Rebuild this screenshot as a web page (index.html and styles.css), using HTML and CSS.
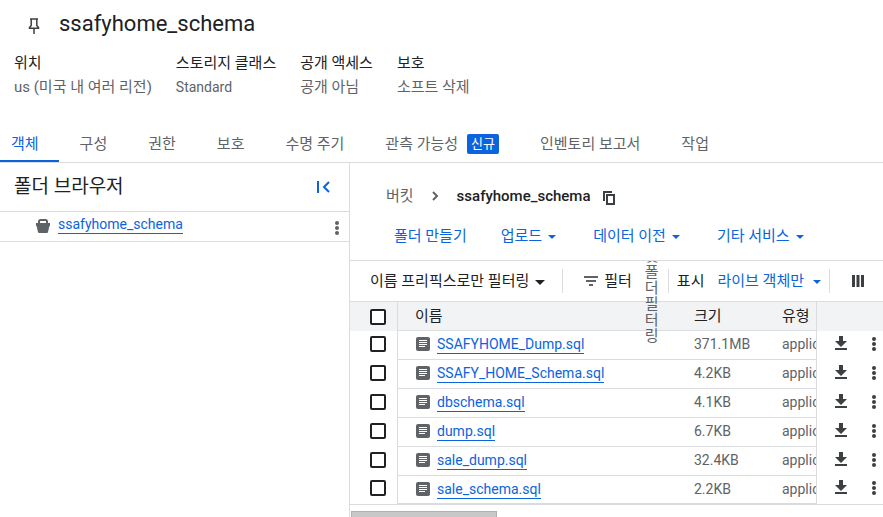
FILE: index.html
```html
<!DOCTYPE html>
<html lang="ko">
<head>
<meta charset="utf-8">
<title>ssafyhome_schema</title>
<link rel="stylesheet" href="styles.css">
</head>
<body>
<svg class="defs" aria-hidden="true">
  <symbol id="doc" viewBox="0 0 14 14"><rect width="14" height="14" rx="2" fill="#5f6368"/><path d="M3 3.5h8M3 5.5h8M3 7.5h8M3 9.5h6" stroke="#fff" stroke-width="1"/></symbol>
  <symbol id="download" viewBox="0 0 14 14"><path d="M5 0h4v5h4L7 11 1 5h4zM1 12h12v2H1z" fill="#3c4043"/></symbol>
  <symbol id="more" viewBox="0 0 4 14"><g fill="currentColor"><circle cx="2" cy="2" r="2"/><circle cx="2" cy="7" r="2"/><circle cx="2" cy="12" r="2"/></g></symbol>
  <symbol id="caret" viewBox="0 0 10 5"><path d="M0 0h10L5 5z" fill="currentColor"/></symbol>
</svg>

<header class="page-head">
  <div class="title-row">
    <svg class="pin" viewBox="0 0 12 16" fill="none" stroke="#3c4043" stroke-width="1.5"><path d="M2 1h8M3.2 1v6.5L1.5 9.5v.8h9v-.8L8.800 7.500V1M6 10v6"/></svg>
    <h1>ssafyhome_schema</h1>
  </div>
  <dl class="facts">
    <div><dt>위치</dt><dd>us (미국 내 여러 리전)</dd></div>
    <div><dt>스토리지 클래스</dt><dd class="latin">Standard</dd></div>
    <div><dt>공개 액세스</dt><dd>공개 아님</dd></div>
    <div><dt>보호</dt><dd>소프트 삭제</dd></div>
  </dl>
</header>

<nav class="tabs">
  <a href="#" class="active" aria-current="page">객체</a>
  <a href="#">구성</a>
  <a href="#">권한</a>
  <a href="#">보호</a>
  <a href="#">수명 주기</a>
  <a href="#">관측 가능성<span class="badge">신규</span></a>
  <a href="#">인벤토리 보고서</a>
  <a href="#">작업</a>
</nav>

<div class="body">
  <aside class="sidebar">
    <div class="side-head">
      <h2>폴더 브라우저</h2>
      <button type="button" aria-label="접기"><svg width="13" height="12" viewBox="0 0 13 12" fill="none" stroke="#0b64de" stroke-width="2"><path d="M1 0v12M12 1L7 6l5 5"/></svg></button>
    </div>
    <div class="bucket-row">
      <svg width="14" height="14" viewBox="0 0 14 14"><path d="M3 4V2.500Q3 1 4.500 1h5Q11 1 11 2.500V4" fill="none" stroke="#5f6368" stroke-width="2"/><path d="M0 4h14v3h-.6L12 13q-.2 1-1 1H3q-.8 0-1-1L.6 7H0z" fill="#5f6368"/></svg>
      <a class="link" href="#">ssafyhome_schema</a>
      <button type="button" class="more" aria-label="더보기"><svg width="4" height="14"><use href="#more"/></svg></button>
    </div>
  </aside>

  <main>
    <div class="crumbs">
      <a href="#">버킷</a>
      <svg width="7" height="10" viewBox="0 0 7 10" fill="none" stroke="#5f6368" stroke-width="2"><path d="M1 1l4 4-4 4"/></svg>
      <strong>ssafyhome_schema</strong>
      <button type="button" aria-label="복사"><svg width="12" height="14" viewBox="0 0 12 14" fill="none" stroke="#3c4043" stroke-width="2"><path d="M1 10V1h8M4 4h7v9H4z"/></svg></button>
    </div>
    <div class="actions">
      <button type="button">폴더 만들기</button>
      <button type="button">업로드<svg class="caret"><use href="#caret"/></svg></button>
      <button type="button">데이터 이전<svg class="caret"><use href="#caret"/></svg></button>
      <button type="button">기타 서비스<svg class="caret"><use href="#caret"/></svg></button>
    </div>
    <div class="filters">
      <button type="button" class="prefix">이름 프리픽스로만 필터링<svg class="caret"><use href="#caret"/></svg></button>
      <div class="filter-box">
        <svg width="14" height="10" viewBox="0 0 14 10" fill="none" stroke="#5f6368" stroke-width="2"><path d="M0 1h14M2 5h10M5 9h4"/></svg>
        <span>필터</span>
        <div class="hint-slot"><span class="hint">및 폴더 필터링</span></div>
      </div>
      <div class="show">
        <span>표시</span>
        <button type="button">라이브 객체만<svg class="caret"><use href="#caret"/></svg></button>
      </div>
      <button type="button" class="columns" aria-label="열"><svg width="12" height="12" viewBox="0 0 12 12" fill="#3c4043"><path d="M0 0h3v12H0zM4.500 0h3v12h-3zM9 0h3v12H9z"/></svg></button>
    </div>

    <table>
      <colgroup><col class="c-check"><col><col class="c-size"><col class="c-type"><col class="c-act"></colgroup>
      <thead>
        <tr><th><input type="checkbox" aria-label="모두 선택"></th><th>이름</th><th>크기</th><th>유형</th><th></th></tr>
      </thead>
      <tbody>
        <tr><td><input type="checkbox" aria-label="SSAFYHOME_Dump.sql"></td><td><div class="file"><svg><use href="#doc"/></svg><a class="link" href="#">SSAFYHOME_Dump.sql</a></div></td><td>371.1MB</td><td>application/octet-stream</td><td><div class="ops"><button type="button" aria-label="다운로드"><svg width="14" height="14"><use href="#download"/></svg></button><button type="button" aria-label="더보기"><svg width="4" height="14"><use href="#more"/></svg></button></div></td></tr>
        <tr><td><input type="checkbox" aria-label="SSAFY_HOME_Schema.sql"></td><td><div class="file"><svg><use href="#doc"/></svg><a class="link" href="#">SSAFY_HOME_Schema.sql</a></div></td><td>4.2KB</td><td>application/octet-stream</td><td><div class="ops"><button type="button" aria-label="다운로드"><svg width="14" height="14"><use href="#download"/></svg></button><button type="button" aria-label="더보기"><svg width="4" height="14"><use href="#more"/></svg></button></div></td></tr>
        <tr><td><input type="checkbox" aria-label="dbschema.sql"></td><td><div class="file"><svg><use href="#doc"/></svg><a class="link" href="#">dbschema.sql</a></div></td><td>4.1KB</td><td>application/octet-stream</td><td><div class="ops"><button type="button" aria-label="다운로드"><svg width="14" height="14"><use href="#download"/></svg></button><button type="button" aria-label="더보기"><svg width="4" height="14"><use href="#more"/></svg></button></div></td></tr>
        <tr><td><input type="checkbox" aria-label="dump.sql"></td><td><div class="file"><svg><use href="#doc"/></svg><a class="link" href="#">dump.sql</a></div></td><td>6.7KB</td><td>application/octet-stream</td><td><div class="ops"><button type="button" aria-label="다운로드"><svg width="14" height="14"><use href="#download"/></svg></button><button type="button" aria-label="더보기"><svg width="4" height="14"><use href="#more"/></svg></button></div></td></tr>
        <tr><td><input type="checkbox" aria-label="sale_dump.sql"></td><td><div class="file"><svg><use href="#doc"/></svg><a class="link" href="#">sale_dump.sql</a></div></td><td>32.4KB</td><td>application/octet-stream</td><td><div class="ops"><button type="button" aria-label="다운로드"><svg width="14" height="14"><use href="#download"/></svg></button><button type="button" aria-label="더보기"><svg width="4" height="14"><use href="#more"/></svg></button></div></td></tr>
        <tr><td><input type="checkbox" aria-label="sale_schema.sql"></td><td><div class="file"><svg><use href="#doc"/></svg><a class="link" href="#">sale_schema.sql</a></div></td><td>2.2KB</td><td>application/octet-stream</td><td><div class="ops"><button type="button" aria-label="다운로드"><svg width="14" height="14"><use href="#download"/></svg></button><button type="button" aria-label="더보기"><svg width="4" height="14"><use href="#more"/></svg></button></div></td></tr>
      </tbody>
    </table>
    <div class="scroll-thumb"></div>
  </main>
</div>
</body>
</html>
```
FILE: styles.css
```css
* { box-sizing: border-box; }

body {
  margin: 0;
  min-height: 100vh;
  display: flex;
  flex-direction: column;
  overflow: hidden;
  background: #fff;
  color: #202124;
  font: 15px/24px Roboto, "Noto Sans CJK KR", sans-serif;
}

h1, h2, dl, dd { margin: 0; font-weight: 400; }
svg { display: block; flex: none; }
a { color: inherit; text-decoration: none; }

button {
  display: flex;
  align-items: center;
  padding: 0;
  border: 0;
  background: none;
  color: inherit;
  font: inherit;
  white-space: nowrap;
}

.defs { position: absolute; width: 0; height: 0; }

.caret { width: 8px; height: 4px; margin: 2px 0 0 6px; }

.link {
  color: #0b64de;
  font-size: 14px;
  line-height: 17px;
  border-bottom: 1px solid;
}

.page-head { padding: 8px 14px 0; }

.title-row { display: flex; align-items: center; gap: 19px; padding-left: 14px; }
.title-row h1 { font-size: 22px; line-height: 32px; }
.pin { width: 12px; height: 16px; margin-top: 4px; }

.facts { display: flex; gap: 24px; padding-top: 11px; }
.facts dd { color: #5f6368; }
.facts .latin { font-size: 14px; }

.tabs {
  display: flex;
  gap: 1px;
  margin-top: 24px;
  border-bottom: 1px solid #dadce0;
  color: #5f6368;
}
.tabs a {
  display: flex;
  align-items: center;
  gap: 9px;
  height: 39px;
  padding: 2px 20px 0;
  white-space: nowrap;
}
.tabs .active {
  padding-left: 11px;
  color: #0b64de;
  box-shadow: inset 0 -2px #0b64de;
}
.badge {
  padding: 0 4px;
  border-radius: 2px;
  background: #0b64de;
  color: #fff;
  font-size: 13px;
  line-height: 20px;
}

.body { flex: 1; display: grid; grid-template-columns: 350px minmax(0, 1fr); }

.sidebar { border-right: 1px solid #dadce0; }
.side-head {
  display: flex;
  justify-content: space-between;
  align-items: center;
  height: 49px;
  padding: 0 19px 0 14px;
  border-bottom: 1px solid #dadce0;
}
.side-head h2 { font-size: 19px; }
.bucket-row {
  display: flex;
  align-items: center;
  gap: 8px;
  height: 30px;
  padding: 0 10px 0 36px;
  border-bottom: 1px solid #dadce0;
}
.bucket-row > svg { margin-bottom: 2px; }
.bucket-row .link { margin-bottom: 4px; }
.bucket-row .more { margin: 2px 0 0 auto; color: #5f6368; }

.crumbs { display: flex; align-items: center; padding: 21px 36px 0; color: #5f6368; }
.crumbs svg { margin-left: 18px; }
.crumbs strong { margin-left: 18px; color: #202124; font-weight: 500; }
.crumbs button svg { margin: 4px 0 0 12px; }

.actions {
  display: flex;
  gap: 34px;
  padding: 16px 44px 12px;
  border-bottom: 1px solid #dadce0;
  color: #0b64de;
}
.actions .caret { margin-right: 3px; }

.filters { display: flex; align-items: center; height: 40px; padding: 0 19px 0 20px; }
.filters > .prefix { margin-right: 17px; }
.prefix .caret { width: 10px; height: 5px; }
.filter-box, .show { display: flex; align-items: center; height: 24px; border-left: 1px solid #dadce0; }
.filter-box { flex: 1; gap: 6px; padding-left: 21px; }
.hint-slot {
  position: relative;
  width: 14px;
  height: 40px;
  margin-left: 7px;
}
.hint {
  position: absolute;
  z-index: 1;
  left: 0;
  bottom: -43px;
  width: 14px;
  height: 83px;
  display: flex;
  align-items: flex-end;
  overflow: hidden;
  color: #5f6368;
  line-height: 16px;
  word-break: break-all;
}
.show { gap: 13px; padding: 0 8px 0 8px; border-right: 1px solid #dadce0; }
.show button { color: #0b64de; }
.show .caret { margin-left: 9px; }
.columns { margin-left: 22px; }

table {
  width: 100%;
  table-layout: fixed;
  border-collapse: separate;
  border-spacing: 0;
  border-top: 1px solid #dadce0;
  border-bottom: 1px solid #dadce0;
}
.c-check { width: 48px; }
.c-size { width: 88px; }
.c-type { width: 47px; }
.c-act { width: 66px; }

th, td { height: 29px; padding: 0 0 0 12px; text-align: left; overflow: hidden; white-space: nowrap; }
th { background: #f1f3f4; font-weight: 400; line-height: 24px; }
td { padding-bottom: 2px; color: #5f6368; font-size: 14px; line-height: 24px; }
th:nth-child(1), td:nth-child(1) { padding-left: 20px; border-right: 1px solid #dadce0; }
th:nth-child(2), td:nth-child(2) { padding-left: 17px; }
th:nth-child(4), td:nth-child(4) { border-right: 1px solid #dadce0; }
tr > :nth-child(n+2):nth-child(-n+4) { border-bottom: 1px solid #dadce0; }
tbody tr:last-child > td { border-bottom: 0; height: 28px; }

input[type="checkbox"] {
  appearance: none;
  display: block;
  width: 16px;
  height: 16px;
  margin: 0;
  border: 2px solid #202124;
  border-radius: 2px;
  background: #fff;
}
td input[type="checkbox"] { margin-bottom: 2px; }

.file { display: flex; align-items: center; gap: 7px; padding-top: 2px; }
.file svg { width: 14px; height: 14px; margin: 0 0 2px 1px; }
.ops { display: flex; align-items: center; gap: 24px; color: #3c4043; padding: 0 0 2px 5px; }
.ops button:first-child { margin-bottom: 2px; }

.scroll-thumb {
  width: 146px;
  height: 12px;
  margin: 6px 0 -12px 1px;
  border: 1px solid #b0b0b0;
  background: #c8c8c8;
}
```
